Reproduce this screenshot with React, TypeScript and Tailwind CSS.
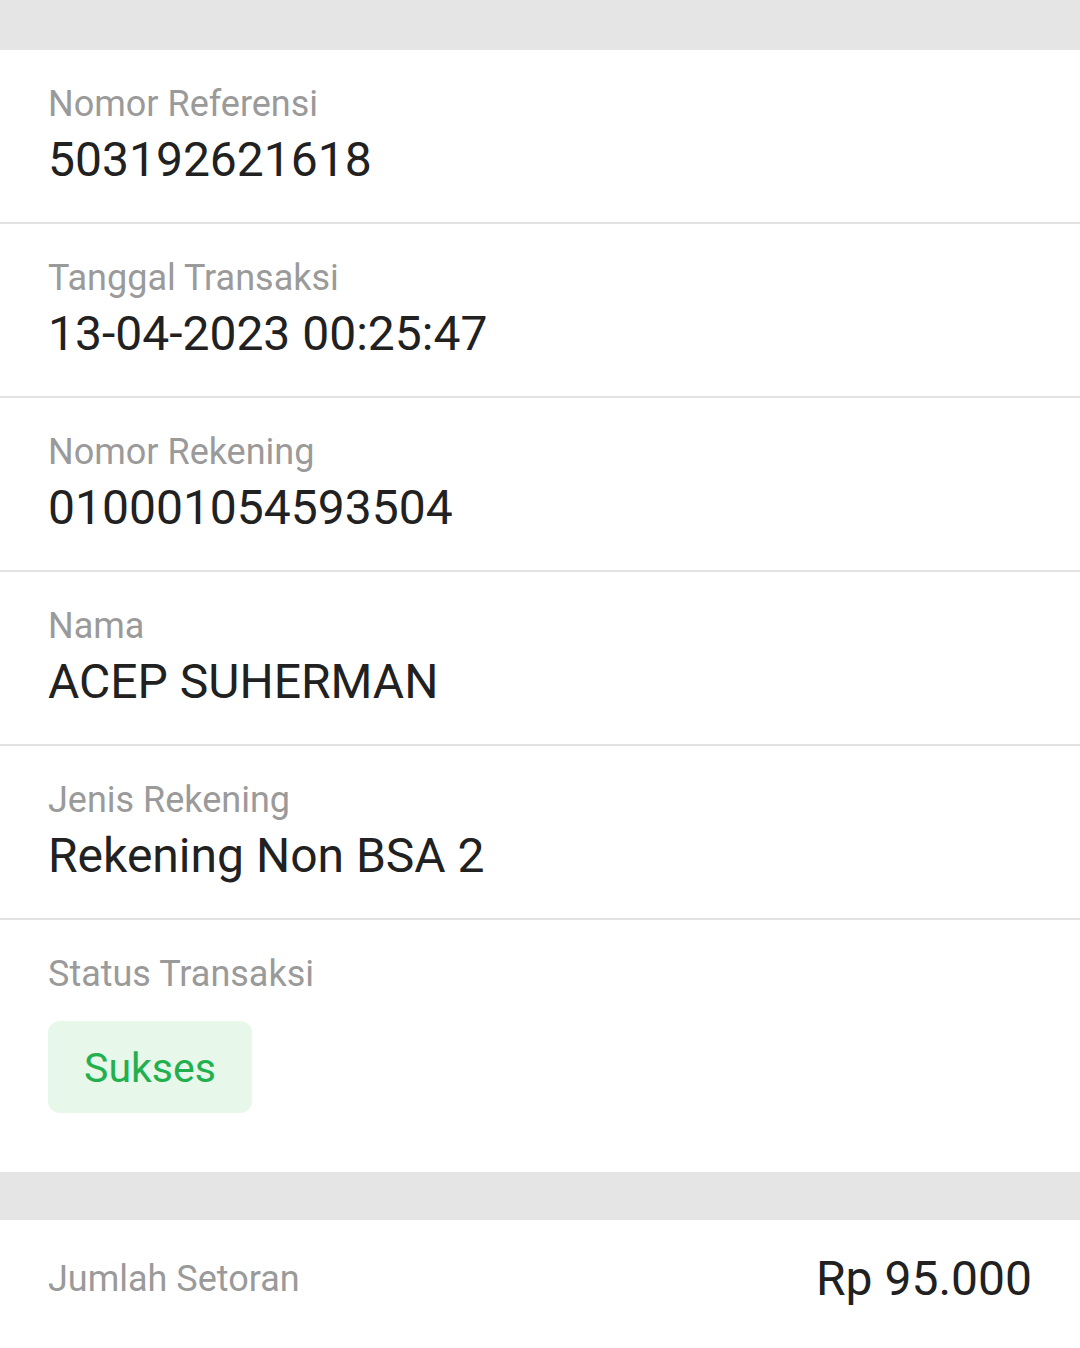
import React from 'react';

const rows = [
  { label: 'Nomor Referensi', value: '503192621618' },
  { label: 'Tanggal Transaksi', value: '13-04-2023 00:25:47' },
  { label: 'Nomor Rekening', value: '010001054593504' },
  { label: 'Nama', value: 'ACEP SUHERMAN' },
  { label: 'Jenis Rekening', value: 'Rekening Non BSA 2' },
];

export default function App() {
  return (
    <div className="min-h-[1348px] bg-white" style={{ fontFamily: 'Roboto, "Noto Sans", sans-serif' }}>
      <div className="h-[50px] bg-[#e5e5e5]" />

      {rows.map((row) => (
        <div key={row.label} className="border-b-2 border-[#e3e3e3] px-12 pt-[34px] pb-[34px]">
          <div className="text-[36px] leading-[40px] text-[#9a9a9a]">{row.label}</div>
          <div className="mt-[8px] text-[48px] leading-[56px] text-[#212121]">{row.value}</div>
        </div>
      ))}

      <div className="px-12 pt-[34px] pb-[59px]">
        <div className="text-[36px] leading-[40px] text-[#9a9a9a]">Status Transaksi</div>
        <div className="mt-[27px] flex h-[92px] w-[204px] items-center justify-center rounded-xl bg-[#e7f7ea] pt-[3px] text-[41px] text-[#22b04e]">
          Sukses
        </div>
      </div>

      <div className="h-[48px] bg-[#e5e5e5]" />

      <div className="flex items-center justify-between px-12 py-[31px]">
        <div className="text-[36px] leading-[40px] text-[#9a9a9a]">Jumlah Setoran</div>
        <div className="text-[48px] leading-[56px] text-[#212121]">Rp 95.000</div>
      </div>
    </div>
  );
}
